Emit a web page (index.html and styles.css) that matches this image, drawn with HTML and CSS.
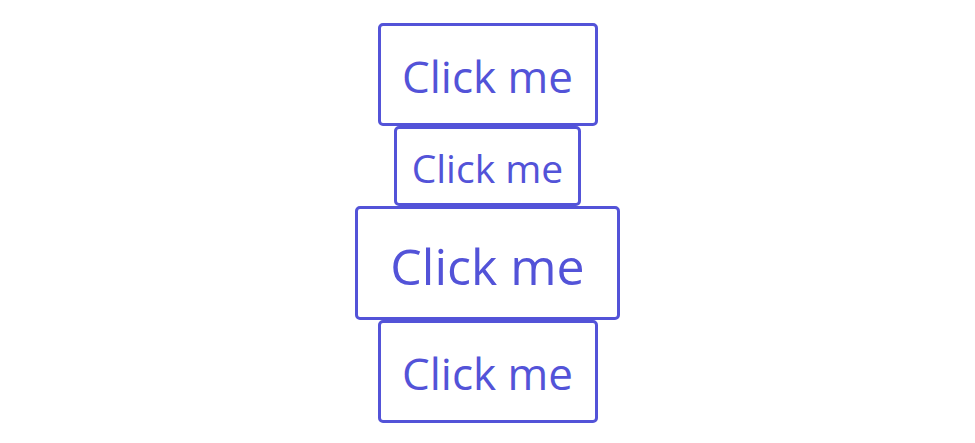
FILE: index.html
```html
<!DOCTYPE html>
<html lang="en">
<head>
    <meta charset="UTF-8">
    <meta name="viewport" content="width=device-width, initial-scale=1.0">
    <title>Buttons</title>
    <link rel="stylesheet" href="styles.css">
</head>
<body>

    <!-- Botões em tamanhos diferentes -->
    <div class="stack">
        <button class="btn">Click me</button>
        <button class="btn btn-small">Click me</button>
        <button class="btn btn-large">Click me</button>
        <button class="btn">Click me</button>
    </div>

</body>
</html>
```

FILE: styles.css
```css
body {
    margin: 0;
    padding: 0;
    background: #fff;
    font-family: 'Open Sans', 'Noto Sans', sans-serif;
}

.stack {
    display: flex;
    flex-direction: column;
    align-items: center;
    padding-top: 23px;
}

.btn {
    font-family: inherit;
    font-size: 44px;
    line-height: 1;
    color: #5353d8;
    background: #fff;
    border: 3px solid #5353d8;
    border-radius: 5px;
    padding: 28px 21.5px 25px;
    margin: 0;
    cursor: pointer;
}

.btn-small {
    font-size: 39px;
    padding: 19px 14.5px 16px;
}

.btn-large {
    font-size: 50px;
    padding: 32px 32px 26px;
}
```
